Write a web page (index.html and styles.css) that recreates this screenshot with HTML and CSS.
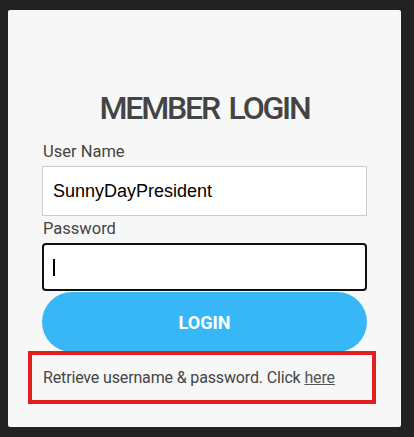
FILE: index.html
```html
<!DOCTYPE html>
<html lang="en">
<head>
<meta charset="utf-8">
<title>Member Login</title>
<link rel="stylesheet" href="styles.css">
</head>
<body>
<div class="page">
  <div class="card">
    <h1 class="title">MEMBER LOGIN</h1>
    <form class="form">
      <label class="label" for="user">User Name</label>
      <div class="input input-user" id="user">SunnyDayPresident</div>
      <label class="label label-pass" for="pass">Password</label>
      <div class="input input-pass" id="pass"><span class="caret"></span></div>
      <div class="btn">LOGIN</div>
      <p class="help">Retrieve username &amp; password. Click <a class="link" href="#">here</a></p>
    </form>
  </div>
</div>
</body>
</html>
```

FILE: styles.css
```css
html, body {
  margin: 0;
  padding: 0;
  background: #222222;
}
.page {
  padding: 10px 13px 10px 8px;
  height: 437px;
  box-sizing: border-box;
}
.card {
  background: #f7f7f7;
  border-radius: 2px;
  height: 417px;
  box-sizing: border-box;
  padding: 79px 34px 0 34px;
  font-family: Roboto, "Liberation Sans", sans-serif;
  color: #444444;
}
.title {
  margin: 0;
  font-size: 32px;
  line-height: 38px;
  font-weight: 500;
  letter-spacing: -2.2px;
  word-spacing: 4px;
  text-align: center;
  color: #444444;
}
.form {
  display: flex;
  flex-direction: column;
  margin-top: 15px;
}
.label {
  font-size: 16.5px;
  line-height: 20px;
  padding-left: 1px;
  color: #444444;
}
.input {
  margin-top: 4px;
  background: #ffffff;
  box-sizing: border-box;
  display: flex;
  align-items: center;
  padding-left: 10px;
  font-family: "Liberation Sans", Arial, sans-serif;
  font-size: 18px;
  color: #000000;
}
.input-user {
  height: 50px;
  border: 1px solid #cccccc;
}
.label-pass {
  margin-top: 3px;
}
.input-pass {
  height: 48px;
  border: 2px solid #111111;
  border-radius: 4px;
  padding-left: 9px;
}
.caret {
  display: block;
  width: 2px;
  height: 17px;
  background: #000000;
}
.btn {
  margin-top: 1px;
  height: 60px;
  border-radius: 30px;
  background: #38b7f6;
  color: #ffffff;
  font-weight: 700;
  font-size: 18px;
  display: flex;
  align-items: center;
  justify-content: center;
}
.help {
  margin: -1px -9px 0 -14px;
  border: 4px solid #e21e1e;
  height: 53px;
  box-sizing: border-box;
  padding: 13px 0 0 11px;
  line-height: 20px;
  font-size: 16px;
  letter-spacing: -0.15px;
  color: #444444;
}
.link {
  color: #555555;
  text-decoration: underline;
}
```
